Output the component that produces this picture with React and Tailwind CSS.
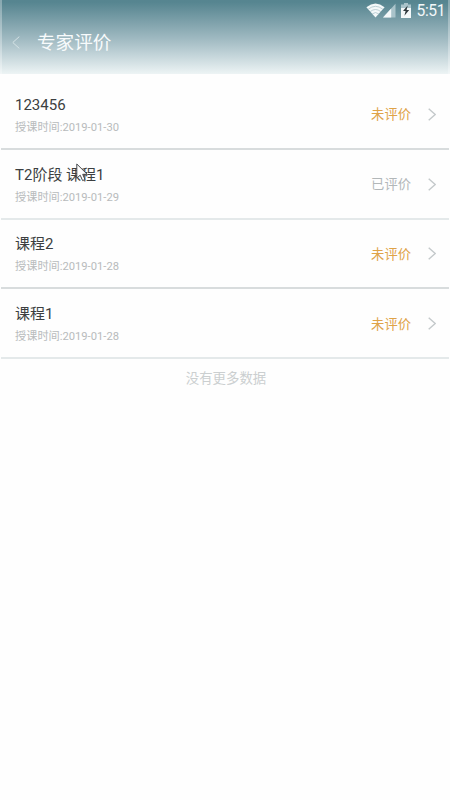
import React from 'react'

const courses = [
  { id: 1, title: "123456", date: "2019-01-30", done: false },
  { id: 2, title: "T2阶段 课程1", date: "2019-01-29", done: true },
  { id: 3, title: "课程2", date: "2019-01-28", done: false },
  { id: 4, title: "课程1", date: "2019-01-28", done: false },
]

const StatusBar = () => {
  return <div className='flex h-5 items-center justify-end pr-[3px]'>
    <svg className='h-[15px] w-[19px]' viewBox='0 0 19 15' fill='none'>
      <path d='M0.4 4.2Q9.5 -3.2 18.6 4.2L9.5 14.6Z' fill='#f3f8f9' />
      <path d='M2.2 6.2Q9.5 0.4 16.8 6.2M4.2 8.6Q9.5 4.4 14.8 8.6M6.2 10.9Q9.5 8.2 12.8 10.9' stroke='#a3bdc4' strokeWidth='0.7' />
    </svg>
    <svg className='-ml-[2px] h-[15px] w-[13px]' viewBox='0 0 13 15'>
      <path d='M0 14.5L12.5 0.8V14.5Z' fill='#a9c3ca' />
      <path d='M0 14.5L8.2 5.5V14.5Z' fill='#f3f8f9' />
    </svg>
    <svg className='ml-[5px] h-[15px] w-[10px]' viewBox='0 0 10 15'>
      <path d='M3 0H7V1.6H10V15H0V1.6H3Z' fill='#a9c3ca' />
      <path d='M0 5H10V15H0Z' fill='#f3f8f9' />
      <path d='M6.7 2.5L2 8.1H4.6L3.4 12.7L8.2 6.9H5.6Z' fill='#303a3e' />
    </svg>
    <span className='ml-[6px] pt-[2px] text-[15.6px] leading-5 tracking-[-0.4px] text-[#f3f8f9]'>5:51</span>
  </div>
}

const CourseItem = ({ course }) => {
  return <li className='flex h-[69.75px] items-center border-b-2 border-[#e4e9ea] pl-[15px] pr-[13px] odd:border-[#d8dcdd]'>
    <div className='flex-1 pt-1'>
      <h2 className='text-[15px] leading-[22px] text-[#3c3f41]'>{course.title}</h2>
      <p className='mt-[2px] text-[11.2px] leading-[20px] text-[#b8bbbc]'>授课时间:{course.date}</p>
    </div>
    <span className={`pt-[3px] text-[13.3px] leading-5 ${course.done ? "text-[#b2b7b9]" : "text-[#dfa347]"}`}>
      {course.done ? "已评价" : "未评价"}
    </span>
    <svg className='ml-[17px] mt-px h-[13px] w-2' viewBox='0 0 8 13' fill='none' stroke='#c4c9cb' strokeWidth='1.4'>
      <path d='M0.7 0.7L7.2 6.5L0.7 12.3' />
    </svg>
  </li>
}

export default function App() {
  return <div className="relative min-h-[800px] w-full overflow-hidden bg-[#fefefe] font-['Roboto','Noto_Sans_CJK_SC',sans-serif]">
    <header className='h-[74px] border-x-2 border-white/30 bg-linear-to-b from-[#568590] from-3% via-[#9fb9c1] via-52% to-[#edf4f5] bg-origin-border'>
      <StatusBar />
      <div className='flex h-11 items-center pl-[10px]'>
        <svg className='h-[13px] w-2' viewBox='0 0 8 13' fill='none' stroke='#d5e2e5' strokeWidth='1'>
          <path d='M7.3 0.6L0.8 6.5L7.3 12.4' />
        </svg>
        <h1 className='ml-[17px] pt-[2px] text-[18.6px] leading-6 text-[#f8fbfc]'>专家评价</h1>
      </div>
    </header>
    <ul className='px-px pt-[6px] [&>li]:pl-[14px]'>
      {courses.map((course) => <CourseItem key={course.id} course={course} />)}
    </ul>
    <p className='mt-[10px] pl-[2px] text-center text-[13.4px] leading-5 text-[#cbcfd0]'>没有更多数据</p>

    {/* mouse pointer */}
    <svg className='absolute left-[76px] top-[163px] h-[19px] w-[13px]' viewBox='0 0 13 19'>
      <path d='M0.8 1V15.2L4.2 12.2L6.6 17.6L9 16.5L6.7 11.3H11.2Z' fill='#fff' stroke='#44484c' strokeWidth='1' />
    </svg>
  </div>
}
